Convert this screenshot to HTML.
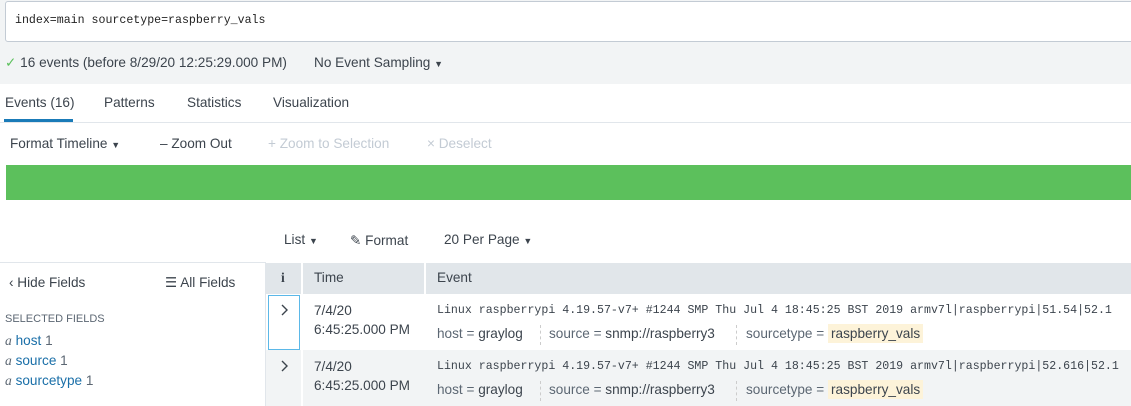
<!DOCTYPE html>
<html><head><style>
*{box-sizing:border-box;margin:0;padding:0}
body{width:1131px;height:406px;overflow:hidden;background:#fff;font-family:"Liberation Sans",sans-serif;font-size:13.6px;color:#3c444d;position:relative}
.a{position:absolute;white-space:nowrap}
.mono{font-family:"Liberation Mono",monospace;font-size:11.6px}
.g{color:#5c6773}
.lnk{color:#1a6fa8}
</style></head><body>
<div class="a" style="left:0;top:0;width:1131px;height:84px;background:#f2f4f5"></div>
<div class="a mono" style="left:5px;top:1px;width:1140px;height:41px;background:#fff;border:1px solid #c3cbd4;border-radius:3px;padding:12px 0 0 9px;color:#222">index=main sourcetype=raspberry_vals</div>
<div class="a" style="left:5px;top:55px"><span style="color:#5cc05c">✓</span> 16 events (before 8/29/20 12:25:29.000 PM)</div>
<div class="a" style="left:314px;top:55px">No Event Sampling <span style="font-size:9px">▼</span></div>
<div class="a" style="left:5px;top:95px">Events (16)</div>
<div class="a" style="left:4px;top:119px;width:69px;height:3px;background:#1a7bb8"></div>
<div class="a" style="left:104px;top:95px">Patterns</div>
<div class="a" style="left:187px;top:95px">Statistics</div>
<div class="a" style="left:273px;top:95px">Visualization</div>
<div class="a" style="left:0;top:122px;width:1131px;height:1px;background:#e1e6eb"></div>
<div class="a" style="left:10px;top:136px">Format Timeline <span style="font-size:9px">▼</span></div>
<div class="a" style="left:160px;top:136px">– Zoom Out</div>
<div class="a" style="left:268px;top:136px;color:#c3cbd4">+ Zoom to Selection</div>
<div class="a" style="left:427px;top:136px;color:#c3cbd4">× Deselect</div>
<div class="a" style="left:6px;top:165px;width:1125px;height:35px;background:#5cc05c"></div>
<div class="a" style="left:284px;top:232px">List <span style="font-size:9px">▼</span></div>
<div class="a" style="left:350px;top:233px">✎ Format</div>
<div class="a" style="left:444px;top:232px">20 Per Page <span style="font-size:9px">▼</span></div>
<div class="a" style="left:0;top:262px;width:265px;height:1px;background:#e1e6eb"></div>
<div class="a" style="left:265px;top:262px;width:1px;height:144px;background:#e1e6eb"></div>
<div class="a" style="left:9px;top:275px">‹ Hide Fields</div>
<div class="a" style="left:165px;top:275px">☰ All Fields</div>
<div class="a g" style="left:5px;top:313px;font-size:11px">SELECTED FIELDS</div>
<div class="a" style="left:5px;top:333px"><i class="g" style="font-family:'Liberation Serif'">a</i> <span class="lnk">host</span> <span class="g">1</span></div>
<div class="a" style="left:5px;top:353px"><i class="g" style="font-family:'Liberation Serif'">a</i> <span class="lnk">source</span> <span class="g">1</span></div>
<div class="a" style="left:5px;top:373px"><i class="g" style="font-family:'Liberation Serif'">a</i> <span class="lnk">sourcetype</span> <span class="g">1</span></div>
<div class="a" style="left:266px;top:263px;width:865px;height:31px;background:#e1e6ea"></div>
<div class="a" style="left:301px;top:263px;width:2px;height:143px;background:#fff"></div>
<div class="a" style="left:424px;top:263px;width:2px;height:31px;background:#fff"></div>
<div class="a" style="left:281px;top:270px;font-weight:bold;font-family:'Liberation Serif'">i</div>
<div class="a" style="left:314px;top:270px">Time</div>
<div class="a" style="left:437px;top:270px">Event</div>
<div class="a" style="left:266px;top:350px;width:865px;height:56px;background:#f2f4f5"></div>
<div class="a" style="left:301px;top:350px;width:2px;height:56px;background:#fff"></div>
<div class="a" style="left:268px;top:295px;width:32px;height:55px;border:1px solid #5bb8e8"></div>
<svg class="a" style="left:280px;top:304px" width="8" height="12"><path d="M2 1l5 5-5 5" fill="none" stroke="#3c444d" stroke-width="1.4"/></svg>
<svg class="a" style="left:280px;top:360px" width="8" height="12"><path d="M2 1l5 5-5 5" fill="none" stroke="#3c444d" stroke-width="1.4"/></svg>
<div class="a" style="left:314px;top:303px">7/4/20</div>
<div class="a" style="left:314px;top:322px">6:45:25.000 PM</div>
<div class="a" style="left:314px;top:359px">7/4/20</div>
<div class="a" style="left:314px;top:378px">6:45:25.000 PM</div>
<div class="a mono" style="left:437px;top:304px">Linux raspberrypi 4.19.57-v7+ #1244 SMP Thu Jul 4 18:45:25 BST 2019 armv7l|raspberrypi|51.54|52.1</div>
<div class="a mono" style="left:437px;top:360px">Linux raspberrypi 4.19.57-v7+ #1244 SMP Thu Jul 4 18:45:25 BST 2019 armv7l|raspberrypi|52.616|52.1</div>
<div class="a" style="left:437px;top:326px"><span class="g">host =</span> graylog</div>
<div class="a" style="left:540px;top:325px;height:20px;border-left:1px dashed #ccc"></div>
<div class="a" style="left:549px;top:326px"><span class="g">source =</span> snmp://raspberry3</div>
<div class="a" style="left:736px;top:325px;height:20px;border-left:1px dashed #ccc"></div>
<div class="a" style="left:746px;top:326px"><span class="g">sourcetype =</span> <span style="background:#fdf3d9;padding:2px 3px">raspberry_vals</span></div>
<div class="a" style="left:437px;top:382px"><span class="g">host =</span> graylog</div>
<div class="a" style="left:540px;top:381px;height:20px;border-left:1px dashed #ccc"></div>
<div class="a" style="left:549px;top:382px"><span class="g">source =</span> snmp://raspberry3</div>
<div class="a" style="left:736px;top:381px;height:20px;border-left:1px dashed #ccc"></div>
<div class="a" style="left:746px;top:382px"><span class="g">sourcetype =</span> <span style="background:#fdf3d9;padding:2px 3px">raspberry_vals</span></div>
</body></html>
